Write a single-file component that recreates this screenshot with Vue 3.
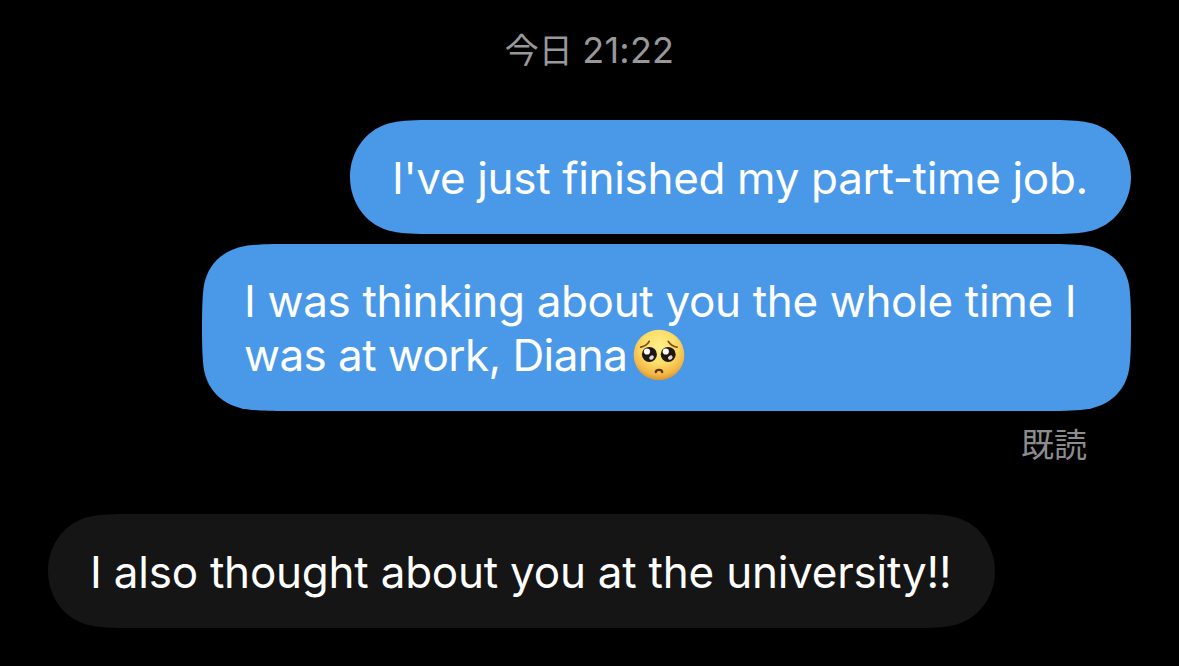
<template>
  <main class="chat">
    <time class="timestamp">今日 <span class="clock">21:22</span></time>

    <section class="sent">
      <div class="bubble bubble-short">
        <span class="line line-job">I've just finished my part-time job.</span>
      </div>
      <div class="bubble bubble-long">
        <span class="line line-thinking">I was thinking about you the whole time I</span>
        <span class="line line-work">
          <span>was at work, Diana</span>
          <svg class="emoji" viewBox="0 0 52 52" role="img" aria-label="🥺">
            <defs>
              <radialGradient id="face" cx="50%" cy="34%" r="68%">
                <stop offset="0" stop-color="#fff08a" />
                <stop offset=".5" stop-color="#fbdc68" />
                <stop offset=".82" stop-color="#f3b545" />
                <stop offset="1" stop-color="#d08d30" />
              </radialGradient>
            </defs>
            <circle cx="26" cy="26" r="25.3" fill="url(#face)" />
            <path d="M7.8 18.2C11.6 17.4 14.4 15.6 16.2 12.4M35.3 12.4C37.4 15.6 40.3 17.4 44 18.2" fill="none" stroke="#80500f" stroke-width="1.8" stroke-linecap="round" />
            <circle cx="16.4" cy="25.4" r="7.5" fill="#211711" />
            <circle cx="35.2" cy="25.4" r="7.5" fill="#211711" />
            <circle cx="14" cy="22.5" r="3.1" fill="#fff" />
            <circle cx="32.8" cy="22.5" r="3.1" fill="#fff" />
            <ellipse cx="18.5" cy="28.6" rx="2.5" ry="1.9" fill="#dedbd8" transform="rotate(-35 18.5 28.6)" />
            <ellipse cx="37.3" cy="28.6" rx="2.5" ry="1.9" fill="#dedbd8" transform="rotate(-35 37.3 28.6)" />
            <path d="M22.8 43C23.2 40.2 28.8 40.2 29.2 43" fill="none" stroke="#5c3410" stroke-width="2.3" stroke-linecap="round" />
          </svg>
        </span>
      </div>
      <span class="read">既読</span>
    </section>

    <section class="received">
      <div class="bubble bubble-reply">
        <span class="line line-reply">I also thought about you at the university!!</span>
      </div>
    </section>
  </main>
</template>

<script setup>
</script>

<style>
body {
  background: #000;
}
</style>

<style scoped>
.chat {
  box-sizing: border-box;
  height: 666px;
  padding: 26px 48px 0;
  display: flex;
  flex-direction: column;
  overflow: hidden;
  background: #000;
  color: #fff;
  font-family: Inter, "Noto Sans CJK JP", sans-serif;
}

.timestamp {
  height: 94px;
  line-height: 48px;
  text-align: center;
  white-space: pre;
  font-size: 34px;
  color: #98989a;
}

.clock {
  font-size: 36px;
  letter-spacing: 0.2px;
}

.sent {
  display: flex;
  flex-direction: column;
  align-items: flex-end;
  height: 394px;
}

.received {
  display: flex;
}

.bubble {
  box-sizing: border-box;
  padding: 31px 42px 29px;
  background: #4a99e9;
  font-size: 44px;
  line-height: 54px;
}

.line {
  display: flex;
  align-items: center;
  height: 54px;
  white-space: pre;
}

.line-job {
  letter-spacing: -0.33px;
}

.line-thinking {
  letter-spacing: -0.34px;
}

.line-work {
  letter-spacing: -0.57px;
}

.line-reply {
  letter-spacing: -0.23px;
}

.bubble-short {
  width: 781px;
  height: 114px;
  clip-path: path("M0 57C0 30 18 7 43 2.5C52 .5 65 0 85 0H696C716 0 729 .5 738 2.5C763 7 781 30 781 57S763 107 738 111.5C729 113.5 716 114 696 114H85C65 114 52 113.5 43 111.5C18 107 0 84 0 57Z");
}

.bubble-long {
  width: 929px;
  height: 167px;
  margin-top: 10px;
  padding-top: 30px;
  clip-path: path("M0 83.5C0 64 .5 50 2 41C6 20 21 6 43 2C52 .5 65 0 85 0H844C864 0 877 .5 886 2C908 6 923 20 927 41C928.5 50 929 64 929 83.5S928.5 117 927 126C923 147 908 161 886 165C877 166.5 864 167 844 167H85C65 167 52 166.5 43 165C21 161 6 147 2 126C.5 117 0 103 0 83.5Z");
}

.bubble-reply {
  width: 947px;
  height: 114px;
  background: #151515;
  clip-path: path("M0 57C0 30 18 7 43 2.5C52 .5 65 0 85 0H862C882 0 895 .5 904 2.5C929 7 947 30 947 57S929 107 904 111.5C895 113.5 882 114 862 114H85C65 114 52 113.5 43 111.5C18 107 0 84 0 57Z");
}

.emoji {
  width: 52px;
  height: 52px;
  margin-left: 6px;
  flex: none;
}

.read {
  margin: 10px 44px 0 0;
  font-size: 33px;
  line-height: 48px;
  color: #8c8c8e;
}
</style>
